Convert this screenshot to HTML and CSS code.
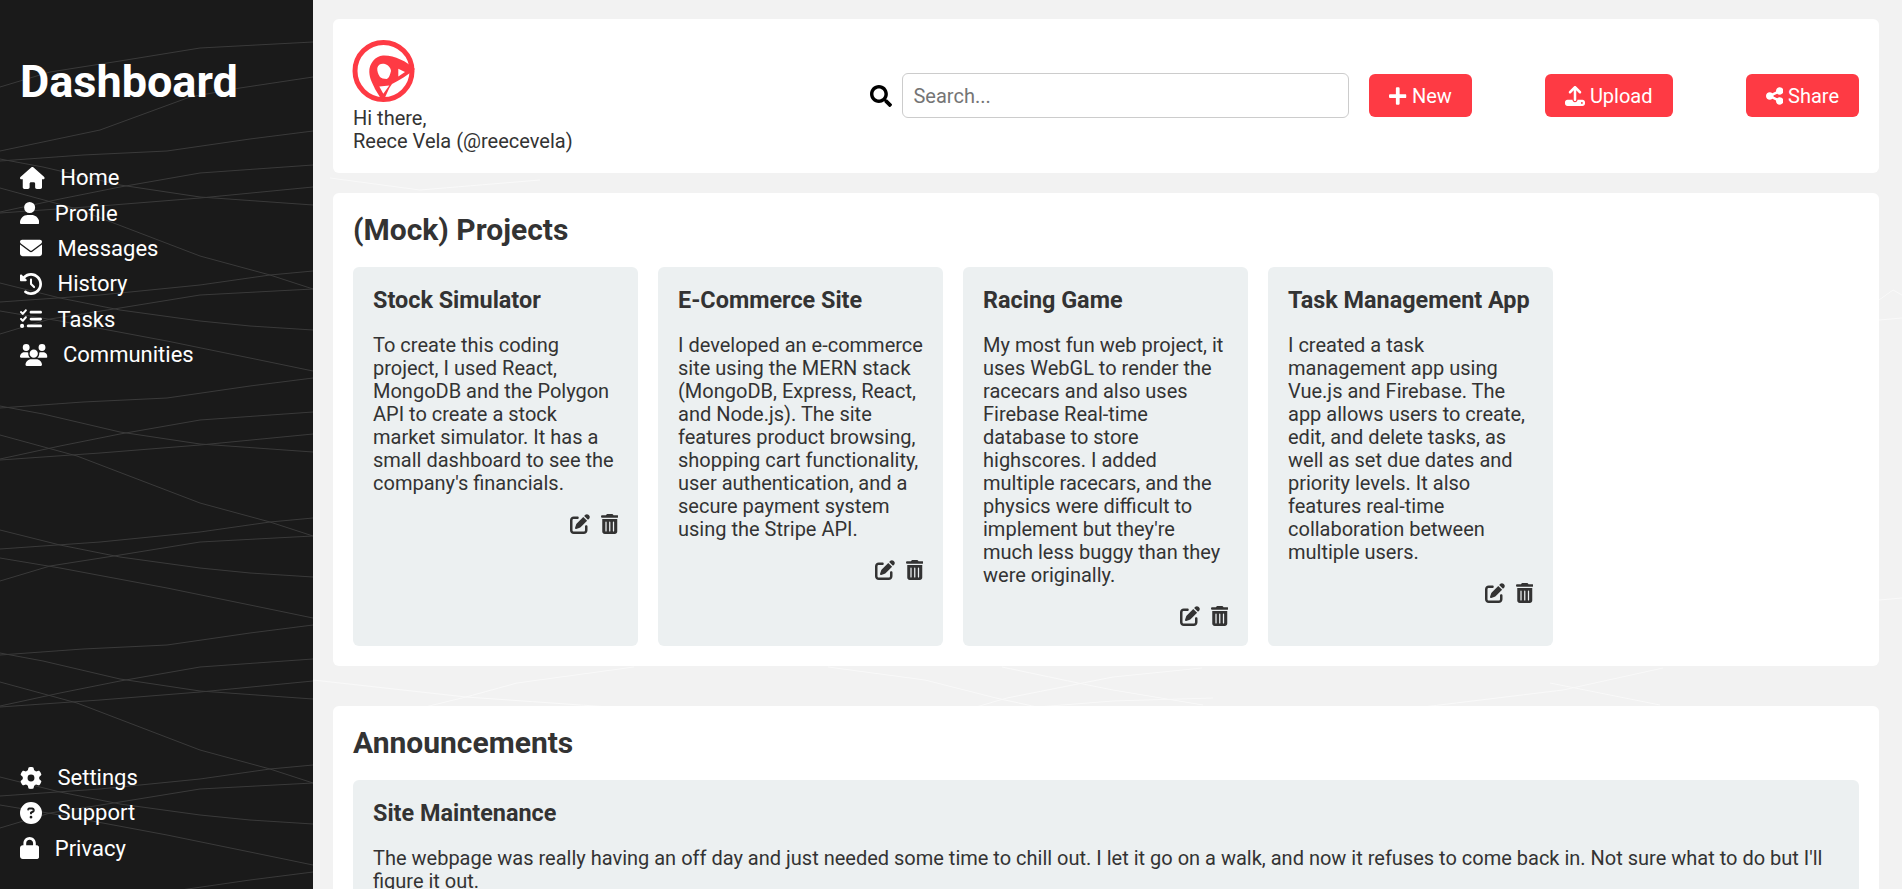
FILE: index.html
```html
<!DOCTYPE html>
<html lang="en">
<head>
<meta charset="utf-8">
<title>Dashboard</title>
<link rel="stylesheet" href="styles.css">
</head>
<body>
<svg class="sprite" aria-hidden="true">
  <symbol id="i-home" viewBox="0 0 576 512"><path d="M575.8 255.5c0 18-15 32.1-32 32.1h-32l.7 160.2c0 2.7-.2 5.4-.5 8.1V472c0 22.1-17.9 40-40 40H456c-1.1 0-2.2 0-3.3-.1c-1.4 .1-2.8 .1-4.2 .1H416 392c-22.1 0-40-17.9-40-40V448 384c0-17.7-14.3-32-32-32H256c-17.7 0-32 14.3-32 32v64 24c0 22.1-17.9 40-40 40H160 128.1c-1.5 0-3-.1-4.5-.2c-1.2 .1-2.4 .2-3.6 .2H104c-22.1 0-40-17.9-40-40V360c0-.9 0-1.9 .1-2.8V287.6H32c-18 0-32-14-32-32.1c0-9 3-17 10-24L266.4 8c7-7 15-8 22-8s15 2 21 7L564.8 231.5c8 7 12 15 11 24z"/></symbol>
  <symbol id="i-user" viewBox="0 0 448 512"><path d="M224 256A128 128 0 1 0 224 0a128 128 0 1 0 0 256zm-45.7 48C79.8 304 0 383.8 0 482.3C0 498.7 13.3 512 29.7 512H418.3c16.4 0 29.7-13.3 29.7-29.7C448 383.8 368.2 304 269.7 304H178.3z"/></symbol>
  <symbol id="i-mail" viewBox="0 0 512 512"><path d="M48 64C21.5 64 0 85.5 0 112c0 15.1 7.1 29.3 19.2 38.4L236.8 313.6c11.4 8.5 27 8.5 38.4 0L492.8 150.4c12.1-9.1 19.2-23.3 19.2-38.4c0-26.5-21.5-48-48-48H48zM0 176V384c0 35.3 28.7 64 64 64H448c35.3 0 64-28.7 64-64V176L294.4 339.2c-22.8 17.1-54 17.1-76.8 0L0 176z"/></symbol>
  <symbol id="i-history" viewBox="0 0 512 512"><path d="M75 75L41 41C25.9 25.9 0 36.6 0 57.9V168c0 13.3 10.7 24 24 24H134.1c21.4 0 32.1-25.9 17-41l-30.8-30.8C155 85.5 203 64 256 64c106 0 192 86 192 192s-86 192-192 192c-40.8 0-78.6-12.7-109.7-34.4c-14.5-10.1-34.4-6.6-44.6 7.9s-6.6 34.4 7.9 44.6C151.2 495 201.7 512 256 512c141.4 0 256-114.6 256-256S397.4 0 256 0C185.3 0 121.3 28.7 75 75zm181 53c-13.3 0-24 10.7-24 24V256c0 6.4 2.5 12.5 7 17l72 72c9.4 9.4 24.6 9.4 33.9 0s9.4-24.6 0-33.9l-65-65V152c0-13.3-10.7-24-24-24z"/></symbol>
  <symbol id="i-tasks" viewBox="0 0 512 512"><path d="M152.1 38.2c9.9 8.9 10.7 24 1.8 33.9l-72 80c-4.4 4.9-10.6 7.8-17.2 7.9s-12.9-2.4-17.6-7L7 113C-2.3 103.6-2.3 88.4 7 79s24.6-9.4 33.9 0l22.1 22.1 55.1-61.2c8.9-9.9 24-10.7 33.9-1.8zm0 160c9.9 8.9 10.7 24 1.8 33.9l-72 80c-4.4 4.9-10.6 7.8-17.2 7.9s-12.9-2.4-17.6-7L7 273c-9.4-9.4-9.4-24.6 0-33.9s24.6-9.4 33.9 0l22.1 22.1 55.1-61.2c8.9-9.9 24-10.7 33.9-1.8zM224 96c0-17.7 14.3-32 32-32H480c17.7 0 32 14.3 32 32s-14.3 32-32 32H256c-17.7 0-32-14.3-32-32zm0 160c0-17.7 14.3-32 32-32H480c17.7 0 32 14.3 32 32s-14.3 32-32 32H256c-17.7 0-32-14.3-32-32zM160 416c0-17.7 14.3-32 32-32H480c17.7 0 32 14.3 32 32s-14.3 32-32 32H192c-17.7 0-32-14.3-32-32zM48 368a48 48 0 1 1 0 96 48 48 0 1 1 0-96z"/></symbol>
  <symbol id="i-users" viewBox="0 0 640 512"><path d="M144 0a80 80 0 1 1 0 160A80 80 0 1 1 144 0zM512 0a80 80 0 1 1 0 160A80 80 0 1 1 512 0zM0 298.7C0 239.8 47.8 192 106.7 192h42.7c15.9 0 31 3.5 44.6 9.7c-1.3 7.2-1.9 14.7-1.9 22.3c0 38.2 16.8 72.5 43.3 96c-.2 0-.4 0-.7 0H21.3C9.6 320 0 310.4 0 298.7zM405.3 320c-.2 0-.4 0-.7 0c26.6-23.5 43.3-57.8 43.3-96c0-7.6-.7-15-1.9-22.3c13.6-6.3 28.7-9.7 44.6-9.7h42.7C592.2 192 640 239.8 640 298.7c0 11.8-9.6 21.3-21.3 21.3H405.3zM224 224a96 96 0 1 1 192 0 96 96 0 1 1 -192 0zM128 485.3C128 411.7 187.7 352 261.3 352H378.7C452.3 352 512 411.7 512 485.3c0 14.7-11.9 26.7-26.7 26.7H154.7c-14.7 0-26.7-11.9-26.7-26.7z"/></symbol>
  <symbol id="i-gear" viewBox="0 0 512 512"><path d="M495.9 166.6c3.2 8.7 .5 18.4-6.4 24.6l-43.3 39.4c1.1 8.3 1.7 16.8 1.7 25.4s-.6 17.1-1.7 25.4l43.3 39.4c6.9 6.2 9.6 15.9 6.4 24.6c-4.4 11.9-9.7 23.3-15.8 34.3l-4.7 8.1c-6.6 11-14 21.4-22.1 31.2c-5.9 7.2-15.7 9.6-24.5 6.8l-55.7-17.7c-13.4 10.3-28.2 18.9-44 25.4l-12.5 57.1c-2 9.1-9 16.3-18.2 17.8c-13.8 2.3-28 3.5-42.5 3.5s-28.7-1.2-42.5-3.5c-9.2-1.5-16.2-8.7-18.2-17.8l-12.5-57.1c-15.8-6.5-30.6-15.1-44-25.4L83.1 425.9c-8.8 2.8-18.6 .3-24.5-6.8c-8.1-9.8-15.5-20.2-22.1-31.2l-4.7-8.1c-6.1-11-11.4-22.4-15.8-34.3c-3.2-8.7-.5-18.4 6.4-24.6l43.3-39.4C64.6 273.1 64 264.6 64 256s.6-17.1 1.7-25.4L22.4 191.2c-6.9-6.2-9.6-15.9-6.4-24.6c4.4-11.9 9.7-23.3 15.8-34.3l4.7-8.1c6.6-11 14-21.4 22.1-31.2c5.9-7.2 15.7-9.6 24.5-6.8l55.7 17.7c13.4-10.3 28.2-18.9 44-25.4l12.5-57.1c2-9.1 9-16.3 18.2-17.8C227.3 1.2 241.5 0 256 0s28.7 1.2 42.5 3.5c9.2 1.5 16.2 8.7 18.2 17.8l12.5 57.1c15.8 6.5 30.6 15.1 44 25.4l55.7-17.7c8.8-2.8 18.6-.3 24.5 6.8c8.1 9.8 15.5 20.2 22.1 31.2l4.7 8.1c6.1 11 11.4 22.4 15.8 34.3zM256 336a80 80 0 1 0 0-160 80 80 0 1 0 0 160z"/></symbol>
  <symbol id="i-help" viewBox="0 0 512 512"><path d="M256 512A256 256 0 1 0 256 0a256 256 0 1 0 0 512zM169.8 165.3c7.9-22.3 29.1-37.3 52.8-37.3h58.3c34.9 0 63.1 28.3 63.1 63.1c0 22.6-12.1 43.5-31.7 54.8L280 264.4c-.2 13-10.9 23.6-24 23.6c-13.3 0-24-10.7-24-24V250.5c0-8.6 4.6-16.5 12.1-20.8l44.3-25.4c4.7-2.7 7.6-7.7 7.6-13.1c0-8.4-6.8-15.1-15.1-15.1H222.6c-3.4 0-6.4 2.1-7.5 5.3l-.4 1.2c-4.4 12.5-18.2 19-30.6 14.6s-19-18.2-14.6-30.6l.4-1.2zM224 352a32 32 0 1 1 64 0 32 32 0 1 1 -64 0z"/></symbol>
  <symbol id="i-lock" viewBox="0 0 448 512"><path d="M144 144v48H304V144c0-44.2-35.8-80-80-80s-80 35.8-80 80zM80 192V144C80 64.5 144.5 0 224 0s144 64.5 144 144v48h16c35.3 0 64 28.7 64 64V448c0 35.3-28.7 64-64 64H64c-35.3 0-64-28.7-64-64V256c0-35.3 28.7-64 64-64H80z"/></symbol>
  <symbol id="i-search" viewBox="0 0 512 512"><path d="M505 442.7L405.3 343c-4.5-4.5-10.6-7-17-7H372c27.6-35.3 44-79.7 44-128C416 93.1 322.9 0 208 0S0 93.1 0 208s93.1 208 208 208c48.3 0 92.7-16.4 128-44v16.3c0 6.4 2.5 12.5 7 17l99.7 99.7c9.4 9.4 24.6 9.4 33.9 0l28.3-28.3c9.4-9.4 9.4-24.6.1-34zM208 336c-70.7 0-128-57.2-128-128 0-70.7 57.2-128 128-128 70.7 0 128 57.2 128 128 0 70.7-57.2 128-128 128z"/></symbol>
  <symbol id="i-plus" viewBox="0 0 448 512"><path d="M416 208H272V64c0-17.67-14.33-32-32-32h-32c-17.67 0-32 14.33-32 32v144H32c-17.67 0-32 14.33-32 32v32c0 17.67 14.33 32 32 32h144v144c0 17.67 14.33 32 32 32h32c17.67 0 32-14.33 32-32V304h144c17.67 0 32-14.33 32-32v-32c0-17.67-14.33-32-32-32z"/></symbol>
  <symbol id="i-upload" viewBox="0 0 512 512"><path d="M288 109.3V352c0 17.7-14.3 32-32 32s-32-14.3-32-32V109.3l-73.4 73.4c-12.5 12.5-32.8 12.5-45.3 0s-12.5-32.8 0-45.3l128-128c12.5-12.5 32.8-12.5 45.3 0l128 128c12.5 12.5 12.5 32.8 0 45.3s-32.8 12.5-45.3 0L288 109.3zM64 352H192c0 35.3 28.7 64 64 64s64-28.7 64-64H448c35.3 0 64 28.7 64 64v32c0 35.3-28.7 64-64 64H64c-35.3 0-64-28.7-64-64V416c0-35.3 28.7-64 64-64zM432 456a24 24 0 1 0 0-48 24 24 0 1 0 0 48z"/></symbol>
  <symbol id="i-share" viewBox="0 0 448 512"><path d="M352 224c53 0 96-43 96-96s-43-96-96-96s-96 43-96 96c0 4 .2 8 .7 11.9l-94.1 47C145.4 170.2 121.9 160 96 160c-53 0-96 43-96 96s43 96 96 96c25.9 0 49.4-10.2 66.6-26.9l94.1 47c-.5 3.9-.7 7.8-.7 11.9c0 53 43 96 96 96s96-43 96-96s-43-96-96-96c-25.9 0-49.4 10.2-66.6 26.9l-94.1-47c.5-3.9 .7-7.8 .7-11.9s-.2-8-.7-11.9l94.1-47C302.6 213.8 326.1 224 352 224z"/></symbol>
  <symbol id="i-edit" viewBox="0 0 512 512"><path d="M471.6 21.7c-21.9-21.9-57.3-21.9-79.2 0L362.3 51.7l97.9 97.9 30.1-30.1c21.9-21.9 21.9-57.3 0-79.2L471.6 21.7zm-299.2 220c-6.1 6.1-10.8 13.6-13.5 21.9l-29.6 88.8c-2.9 8.6-.6 18.1 5.8 24.6s15.9 8.7 24.6 5.8l88.8-29.6c8.2-2.7 15.7-7.4 21.9-13.5L437.7 172.3 339.7 74.3 172.4 241.7zM96 64C43 64 0 107 0 160V416c0 53 43 96 96 96H352c53 0 96-43 96-96V320c0-17.7-14.3-32-32-32s-32 14.3-32 32v96c0 17.7-14.3 32-32 32H96c-17.7 0-32-14.3-32-32V160c0-17.7 14.3-32 32-32h96c17.7 0 32-14.3 32-32s-14.3-32-32-32H96z"/></symbol>
  <symbol id="i-trash" viewBox="0 0 448 512"><path d="M135.2 17.7C140.6 6.8 151.7 0 163.8 0H284.2c12.1 0 23.2 6.8 28.6 17.7L320 32h96c17.7 0 32 14.3 32 32s-14.3 32-32 32H32C14.3 96 0 81.7 0 64S14.3 32 32 32h96l7.2-14.3zM32 128H416V448c0 35.3-28.7 64-64 64H96c-35.3 0-64-28.7-64-64V128zm96 64c-8.8 0-16 7.2-16 16V432c0 8.8 7.2 16 16 16s16-7.2 16-16V208c0-8.8-7.2-16-16-16zm96 0c-8.8 0-16 7.2-16 16V432c0 8.8 7.2 16 16 16s16-7.2 16-16V208c0-8.8-7.2-16-16-16zm96 0c-8.8 0-16 7.2-16 16V432c0 8.8 7.2 16 16 16s16-7.2 16-16V208c0-8.8-7.2-16-16-16z"/></symbol>
</svg>

<div class="app">
  <aside class="sidebar">
    <svg class="lines lines-dark" viewBox="0 0 313 889" aria-hidden="true">
      <defs>
        <g id="tile-core">
          <polyline points="0,334 50,319 120,308 200,295 313,289"/>
          <polyline points="0,408 83,402 167,398 250,386 313,378"/>
          <polyline points="0,459 60,446 120,434 200,420 313,412"/>
          <polyline points="0,406 43,414 120,432 200,444 313,452"/>
          <polyline points="0,460 100,453 200,445 313,434"/>
          <polyline points="0,435 77,456 200,503 270,522 313,536"/>
        </g>
        <g id="tile-extra">
          <polyline points="0,302 100,295 200,285 270,275 313,271"/>
          <polyline points="0,283 60,298 120,310 200,321 250,326 313,330"/>
          <polyline points="0,311 60,321 167,341 250,358 313,371"/>
        </g>
      </defs>
      <polyline points="0,151 100,130 190,97 240,88 313,77"/>
      <use href="#tile-core" y="-247"/>
      <use href="#tile-core"/>
      <use href="#tile-extra"/>
      <use href="#tile-core" y="247"/>
      <use href="#tile-extra" y="247"/>
      <use href="#tile-core" y="494"/>
      <use href="#tile-extra" y="494"/>
    </svg>
    <h1 class="brand">Dashboard</h1>
    <nav class="nav">
      <a class="nav-item"><svg class="ic ic-w25"><use href="#i-home"/></svg>Home</a>
      <a class="nav-item"><svg class="ic ic-w19"><use href="#i-user"/></svg>Profile</a>
      <a class="nav-item"><svg class="ic ic-w22"><use href="#i-mail"/></svg>Messages</a>
      <a class="nav-item"><svg class="ic ic-w22"><use href="#i-history"/></svg>History</a>
      <a class="nav-item"><svg class="ic ic-w22"><use href="#i-tasks"/></svg>Tasks</a>
      <a class="nav-item"><svg class="ic ic-w27"><use href="#i-users"/></svg>Communities</a>
    </nav>
    <nav class="nav nav-bottom">
      <a class="nav-item"><svg class="ic ic-w22"><use href="#i-gear"/></svg>Settings</a>
      <a class="nav-item"><svg class="ic ic-w22"><use href="#i-help"/></svg>Support</a>
      <a class="nav-item"><svg class="ic ic-w19"><use href="#i-lock"/></svg>Privacy</a>
    </nav>
  </aside>

  <main class="main">
    <svg class="lines lines-light" viewBox="0 0 1589 889" aria-hidden="true">
      <polyline points="0,680 153,697 296,707"/>
      <polyline points="112,707 153,697 204,683 321,667"/>
      <polyline points="515,667 612,680 683,698 724,707"/>
      <polyline points="663,707 694,698 800,677 889,668"/>
      <polyline points="689,667 765,683 800,690 890,705"/>
      <polyline points="724,707 800,701 900,698"/>
      <polyline points="1237,683 1347,705"/>
      <polyline points="1110,707 1250,690 1350,668"/>
      <polyline points="17,178 107,190 227,180"/>
      <polyline points="1566,300 1580,290 1589,295"/>
      <polyline points="1566,320 1589,318"/>
      <polyline points="1566,600 1589,598"/>
    </svg>

    <header class="panel topbar">
      <div class="greeting">
        <svg class="logo" viewBox="0 0 80 80" aria-hidden="true">
          <circle class="logo-ring" cx="39.5" cy="40" r="28.5"/>
          <path class="logo-mark" fill-rule="evenodd" d="M71 38C62 30 50 24 39 24.5C31 25 25 33 25.3 41C25.5 48 29 53 31 58L39 71C42 65 44 58 48 53C56 49 64 44 71 38ZM33.3 37C34 33 38 32 41 33C44 34 47 37 47 40C46 44 45 47 42.7 48C40 48 37 47 36 46C34 43 33 40 33.3 37ZM54.3 37.8L61 41L54.3 45.5ZM35.3 55.5L45.3 54.5L39.3 62.8Z"/>
        </svg>
        <p class="hello">Hi there,<br>Reece Vela (@reecevela)</p>
      </div>
      <div class="search">
        <svg class="search-ic"><use href="#i-search"/></svg>
        <input class="search-input" type="text" placeholder="Search...">
        <button class="btn"><svg class="btn-ic btn-ic-plus"><use href="#i-plus"/></svg>New</button>
      </div>
      <button class="btn"><svg class="btn-ic"><use href="#i-upload"/></svg>Upload</button>
      <button class="btn"><svg class="btn-ic btn-ic-share"><use href="#i-share"/></svg>Share</button>
    </header>

    <section class="panel">
      <h2 class="panel-title">(Mock) Projects</h2>
      <div class="project-grid">
        <article class="card project">
          <h3 class="card-title">Stock Simulator</h3>
          <p class="card-text">To create this coding project, I used React, MongoDB and the Polygon API to create a stock market simulator. It has a small dashboard to see the company's financials.</p>
          <div class="card-actions"><svg class="act act-edit"><use href="#i-edit"/></svg><svg class="act act-trash"><use href="#i-trash"/></svg></div>
        </article>
        <article class="card project">
          <h3 class="card-title">E-Commerce Site</h3>
          <p class="card-text">I developed an e-commerce site using the MERN stack (MongoDB, Express, React, and Node.js). The site features product browsing, shopping cart functionality, user authentication, and a secure payment system using the Stripe API.</p>
          <div class="card-actions"><svg class="act act-edit"><use href="#i-edit"/></svg><svg class="act act-trash"><use href="#i-trash"/></svg></div>
        </article>
        <article class="card project">
          <h3 class="card-title">Racing Game</h3>
          <p class="card-text">My most fun web project, it uses WebGL to render the racecars and also uses Firebase Real-time database to store highscores. I added multiple racecars, and the physics were difficult to implement but they're much less buggy than they were originally.</p>
          <div class="card-actions"><svg class="act act-edit"><use href="#i-edit"/></svg><svg class="act act-trash"><use href="#i-trash"/></svg></div>
        </article>
        <article class="card project">
          <h3 class="card-title">Task Management App</h3>
          <p class="card-text">I created a task management app using Vue.js and Firebase. The app allows users to create, edit, and delete tasks, as well as set due dates and priority levels. It also features real-time collaboration between multiple users.</p>
          <div class="card-actions"><svg class="act act-edit"><use href="#i-edit"/></svg><svg class="act act-trash"><use href="#i-trash"/></svg></div>
        </article>
      </div>
    </section>

    <section class="panel panel-announce">
      <h2 class="panel-title">Announcements</h2>
      <article class="card">
        <h3 class="card-title card-title-sm">Site Maintenance</h3>
        <p class="card-text">The webpage was really having an off day and just needed some time to chill out. I let it go on a walk, and now it refuses to come back in. Not sure what to do but I'll figure it out.</p>
      </article>
    </section>
  </main>
</div>
</body>
</html>
```

FILE: styles.css
```css
* { box-sizing: border-box; }
html, body { margin: 0; height: 100%; overflow: hidden; }
body { font-family: Roboto, "Liberation Sans", sans-serif; color: #333; background: #f2f2f2; }
.sprite { width: 0; height: 0; position: absolute; }

.app { display: flex; height: 889px; overflow: hidden; }

.lines { position: absolute; left: 0; top: 0; fill: none; pointer-events: none; }
.lines-dark { width: 313px; height: 889px; stroke: #3a3a3a; stroke-width: 1; }
.lines-light { width: 1589px; height: 889px; stroke: #f9f9f9; stroke-width: 1; }

.sidebar {
  position: relative;
  flex: 0 0 313px;
  display: flex;
  flex-direction: column;
  padding: 56px 20px 23px;
  background: #1a1a1a;
  color: #fff;
}
.brand { position: relative; margin: 0 0 52px; font-size: 45px; line-height: 52px; font-weight: 700; }
.nav { position: relative; display: flex; flex-direction: column; }
.nav-bottom { margin-top: auto; }
.nav-item { display: flex; align-items: center; gap: 15.5px; height: 35.4px; font-size: 22px; }
.ic { height: 22px; fill: #fff; flex: none; }
.ic-w19 { width: 19.25px; }
.ic-w22 { width: 22px; }
.ic-w25 { width: 24.75px; }
.ic-w27 { width: 27.5px; }

.main { position: relative; flex: 1; min-width: 0; padding: 19px 23px 0 20px; }
.panel { position: relative; background: #fff; border-radius: 6px; padding: 20px; margin-bottom: 20px; }
.panel-announce { margin-top: 40px; }
.panel-title { margin: 0 0 20px; font-size: 30px; line-height: 34px; font-weight: 700; }

.topbar { display: flex; align-items: center; gap: 73px; height: 154px; }
.greeting { display: flex; flex-direction: column; margin-right: auto; }
.logo { width: 80px; height: 80px; margin: -9px 0 -4px -9px; }
.logo-ring { fill: none; stroke: #fe3a44; stroke-width: 5; }
.logo-mark { fill: #fe3a44; }
.hello { margin: 0; font-size: 20px; line-height: 23px; }

.search { display: flex; align-items: center; margin-bottom: 1px; }
.search-ic { width: 22px; height: 22px; fill: #000; margin-right: 10px; flex: none; }
.search-input {
  width: 447px; height: 45px; margin-right: 20px; padding: 0 10px;
  font: 20px Roboto, sans-serif; color: #333; background: #fff;
  border: 1px solid #ccc; border-radius: 6px; outline: none;
}
.search-input::placeholder { color: #757575; }

.btn {
  display: inline-flex; align-items: center; gap: 5px; height: 43px; padding: 0 20px;
  font: 20px Roboto, sans-serif; color: #fff; background: #fe3a44;
  border: 0; border-radius: 6px; margin-bottom: 1px;
}
.search .btn { margin-bottom: 0; }
.btn-ic { width: 20px; height: 20px; fill: #fff; flex: none; }
.btn-ic-plus { width: 17.5px; }
.btn-ic-share { width: 17.5px; }

.project-grid { display: flex; gap: 20px; }
.card { background: #ecf0f1; border-radius: 6px; padding: 20px; }
.project { flex: 0 0 285px; }
.card-title { margin: 0 0 21px; font-size: 23.4px; line-height: 26px; font-weight: 700; }
.card-text { margin: 0; font-size: 20px; line-height: 23px; }
.card-actions { display: flex; justify-content: flex-end; align-items: center; gap: 11px; margin-top: 19px; }
.act { height: 20px; fill: #333; flex: none; }
.act-edit { width: 20px; }
.act-trash { width: 17.5px; }
```
